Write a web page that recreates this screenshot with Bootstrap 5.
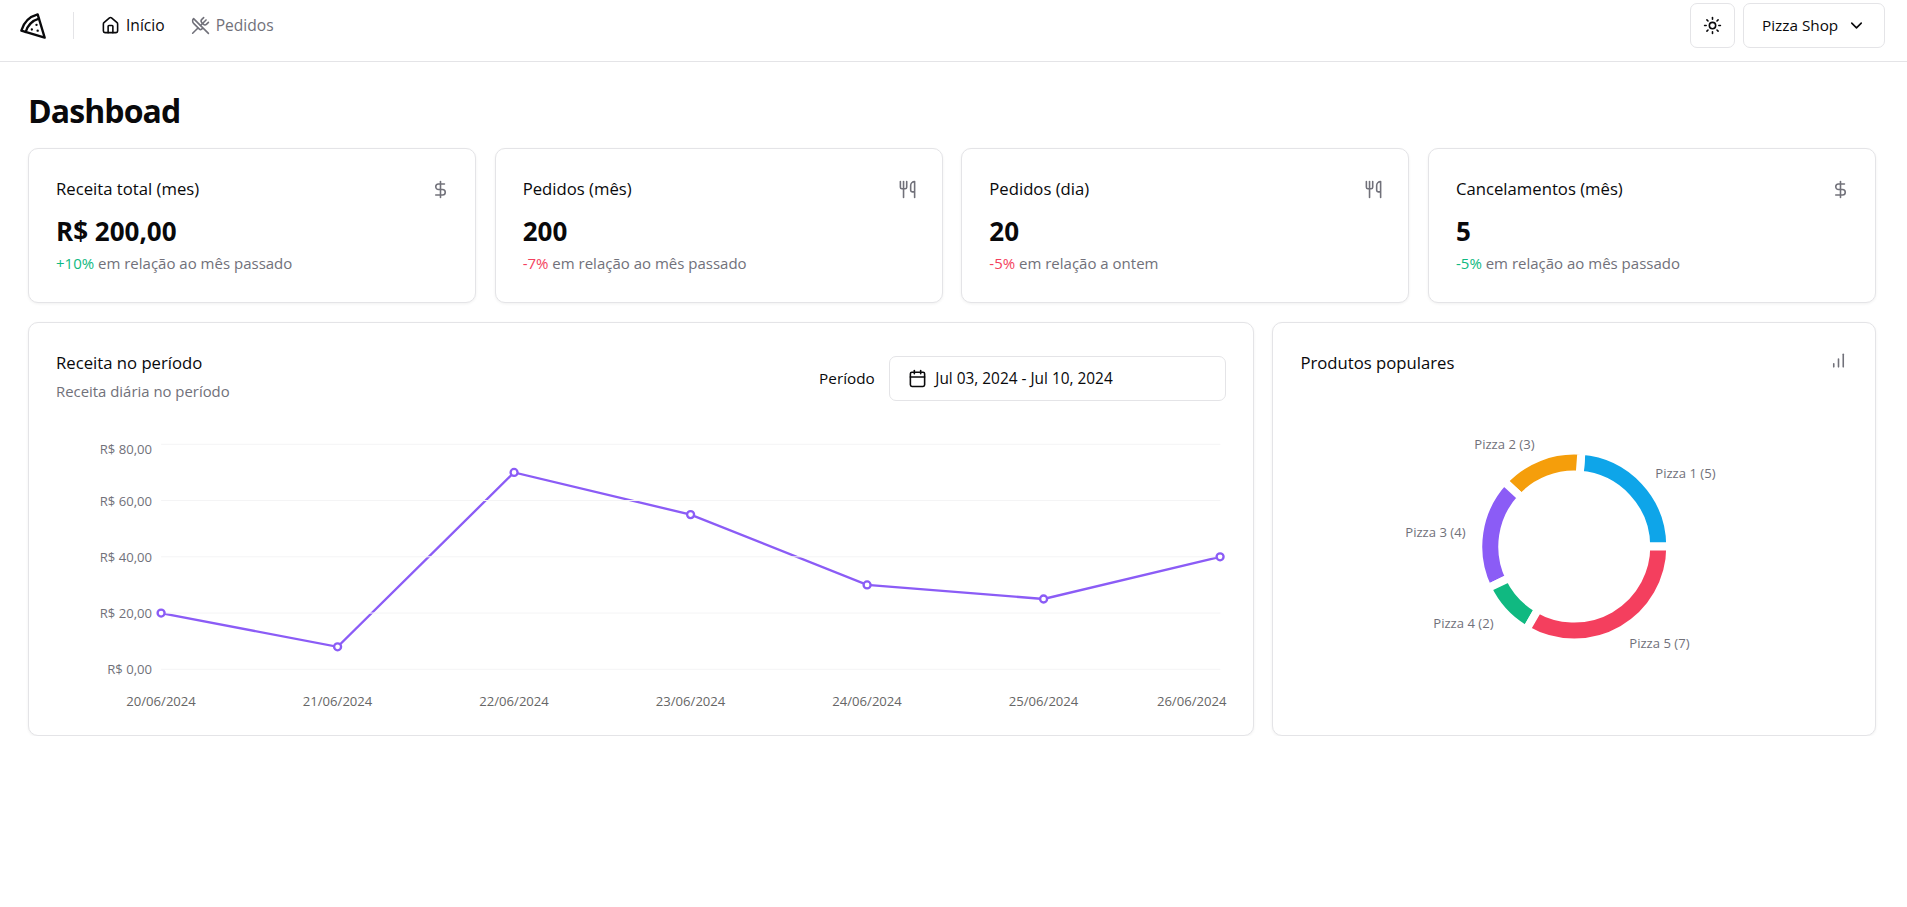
<!DOCTYPE html>
<html lang="pt-BR">
<head>
  <meta charset="UTF-8">
  <meta name="viewport" content="width=device-width, initial-scale=1.0">
  <title>Dashboard - Pizza Shop</title>
  <link href="https://cdn.jsdelivr.net/npm/bootstrap@5.3.2/dist/css/bootstrap.min.css" rel="stylesheet">
  <style>
    body {
      font-family: "Open Sans", "Liberation Sans", sans-serif;
      font-size: 15.3px;
      color: #09090b;
      background: #fff;
    }
    svg.ico {
      fill: none;
      stroke: currentColor;
      stroke-width: 2;
      stroke-linecap: round;
      stroke-linejoin: round;
      flex: none;
    }
    .top-bar {
      height: 62px;
      padding: 3px 22px 13px 19px;
      border-bottom: 1px solid #e4e4e7;
    }
    .top-divider {
      width: 1px;
      height: 27px;
      background: #e4e4e7;
      margin: 0 27px 0 26px;
    }
    .top-links { gap: 26px; }
    .top-link {
      color: #71717a;
      font-size: 15.6px;
      font-weight: 500;
      text-decoration: none;
      padding: 0;
      gap: 6px;
    }
    .top-link.is-active { color: #09090b; }
    .tool-btn {
      height: 45px;
      border: 1px solid #e4e4e7;
      border-radius: 7px;
      background: #fff;
      color: #09090b;
      font-size: 15.3px;
      font-weight: 500;
    }
    .tool-icon { width: 45px; padding: 0; }
    .tool-shop { width: 142px; padding: 0 18px; }
    .page-main { padding: 28px 31px 0 28px; }
    .page-title {
      font-size: 32px;
      font-weight: 700;
      letter-spacing: -.9px;
      line-height: 42px;
      margin-bottom: 16px;
    }
    .stat-cols {
      display: grid;
      grid-template-columns: repeat(4, 1fr);
      gap: 18.67px;
      margin-bottom: 19px;
    }
    .chart-cols {
      display: grid;
      grid-template-columns: repeat(9, 1fr);
      column-gap: 18.67px;
    }
    .chart-wide { grid-column: span 6; }
    .chart-narrow { grid-column: span 3; }
    .panel {
      border: 1px solid #e4e4e7;
      border-radius: 10px;
      box-shadow: 0 1px 3px rgba(0, 0, 0, .06);
    }
    .stat-body { padding: 27px 25px 26px 27px; height: 153px; }
    .stat-head { height: 26px; margin-bottom: 11px; font-size: 16.7px; font-weight: 500; }
    .stat-value { font-size: 26px; font-weight: 700; line-height: 37px; margin-bottom: 4px; }
    .stat-note { font-size: 15px; line-height: 19px; color: #71717a; }
    .up { color: #10b981; }
    .down { color: #f43f5e; }
    .muted-ico { color: #71717a; }
    .panel-head { padding: 28px 27px 6px 27px; height: 89px; }
    .panel-title { font-size: 16.7px; font-weight: 500; line-height: 24px; }
    .panel-sub { color: #71717a; font-size: 14.9px; line-height: 22px; margin-top: 5px; }
    .period-label { font-weight: 500; margin-right: 14px; }
    .period-box {
      width: 337px;
      height: 45px;
      border: 1px solid #e4e4e7;
      border-radius: 7px;
      padding: 0 18px;
      gap: 8.5px;
      font-size: 15.4px;
    }
    .chart-box { display: block; width: 100%; height: 323px; }
    .chart-box text { font-family: "Open Sans", "Liberation Sans", sans-serif; font-size: 13.1px; fill: #71717a; }
  </style>
</head>
<body>
  <!-- Top bar -->
  <header class="top-bar d-flex align-items-center">
    <svg class="ico" width="28" height="28" viewBox="0 0 24 24"><path d="M15 11h.01"/><path d="M11 15h.01"/><path d="M16 16h.01"/><path d="m2 16 20 6-6-20A20 20 0 0 0 2 16"/><path d="M5.71 17.11a17.04 17.04 0 0 1 11.4-11.4"/></svg>
    <div class="top-divider"></div>
    <nav class="nav top-links">
      <a class="nav-link top-link is-active d-flex align-items-center" href="#">
        <svg class="ico" width="19" height="19" viewBox="0 0 24 24"><path d="M15 21v-8a1 1 0 0 0-1-1h-4a1 1 0 0 0-1 1v8"/><path d="M3 10a2 2 0 0 1 .709-1.528l7-5.999a2 2 0 0 1 2.582 0l7 5.999A2 2 0 0 1 21 10v9a2 2 0 0 1-2 2H5a2 2 0 0 1-2-2z"/></svg>
        Início
      </a>
      <a class="nav-link top-link d-flex align-items-center" href="#">
        <svg class="ico" width="19" height="19" viewBox="0 0 24 24"><path d="m16 2-2.3 2.3a3 3 0 0 0 0 4.2l1.8 1.8a3 3 0 0 0 4.2 0L22 8"/><path d="M15 15 3.3 3.3a4.2 4.2 0 0 0 0 6l7.3 7.3c.7.7 2 .7 2.8 0L15 15Zm0 0 7 7"/><path d="m2.1 21.8 6.4-6.3"/><path d="m19 5-7 7"/></svg>
        Pedidos
      </a>
    </nav>
    <div class="ms-auto d-flex gap-2">
      <button type="button" class="btn tool-btn tool-icon d-flex align-items-center justify-content-center">
        <svg class="ico" width="19" height="19" viewBox="0 0 24 24"><circle cx="12" cy="12" r="4"/><path d="M12 2v2"/><path d="M12 20v2"/><path d="m4.93 4.93 1.41 1.41"/><path d="m17.66 17.66 1.41 1.41"/><path d="M2 12h2"/><path d="M20 12h2"/><path d="m6.34 17.66-1.41 1.41"/><path d="m19.07 4.93-1.41 1.41"/></svg>
      </button>
      <button type="button" class="btn tool-btn tool-shop d-flex align-items-center justify-content-between">
        Pizza Shop
        <svg class="ico" width="19" height="19" viewBox="0 0 24 24"><path d="m6 9 6 6 6-6"/></svg>
      </button>
    </div>
  </header>

  <main class="page-main">
    <h1 class="page-title">Dashboad</h1>

    <!-- Stat cards -->
    <section class="stat-cols">
      <div class="card panel">
        <div class="stat-body">
          <div class="stat-head d-flex justify-content-between align-items-center">
            Receita total (mes)
            <svg class="ico muted-ico" width="19" height="19" viewBox="0 0 24 24"><path d="M12 2v20"/><path d="M17 5H9.5a3.5 3.5 0 0 0 0 7h5a3.5 3.5 0 0 1 0 7H6"/></svg>
          </div>
          <div class="stat-value">R$ 200,00</div>
          <div class="stat-note"><span class="up">+10%</span> em relação ao mês passado</div>
        </div>
      </div>
      <div class="card panel">
        <div class="stat-body">
          <div class="stat-head d-flex justify-content-between align-items-center">
            Pedidos (mês)
            <svg class="ico muted-ico" width="19" height="19" viewBox="0 0 24 24"><path d="M3 2v7c0 1.1.9 2 2 2h4a2 2 0 0 0 2-2V2"/><path d="M7 2v20"/><path d="M21 15V2a5 5 0 0 0-5 5v6c0 1.1.9 2 2 2h3Zm0 0v7"/></svg>
          </div>
          <div class="stat-value">200</div>
          <div class="stat-note"><span class="down">-7%</span> em relação ao mês passado</div>
        </div>
      </div>
      <div class="card panel">
        <div class="stat-body">
          <div class="stat-head d-flex justify-content-between align-items-center">
            Pedidos (dia)
            <svg class="ico muted-ico" width="19" height="19" viewBox="0 0 24 24"><path d="M3 2v7c0 1.1.9 2 2 2h4a2 2 0 0 0 2-2V2"/><path d="M7 2v20"/><path d="M21 15V2a5 5 0 0 0-5 5v6c0 1.1.9 2 2 2h3Zm0 0v7"/></svg>
          </div>
          <div class="stat-value">20</div>
          <div class="stat-note"><span class="down">-5%</span> em relação a ontem</div>
        </div>
      </div>
      <div class="card panel">
        <div class="stat-body">
          <div class="stat-head d-flex justify-content-between align-items-center">
            Cancelamentos (mês)
            <svg class="ico muted-ico" width="19" height="19" viewBox="0 0 24 24"><path d="M12 2v20"/><path d="M17 5H9.5a3.5 3.5 0 0 0 0 7h5a3.5 3.5 0 0 1 0 7H6"/></svg>
          </div>
          <div class="stat-value">5</div>
          <div class="stat-note"><span class="up">-5%</span> em relação ao mês passado</div>
        </div>
      </div>
    </section>

    <!-- Charts -->
    <section class="chart-cols">
      <div class="card panel chart-wide">
        <div class="panel-head d-flex justify-content-between align-items-center">
          <div class="align-self-start">
            <div class="panel-title">Receita no período</div>
            <div class="panel-sub">Receita diária no período</div>
          </div>
          <div class="d-flex align-items-center">
            <span class="period-label">Período</span>
            <div class="period-box d-flex align-items-center">
              <svg class="ico" width="19" height="19" viewBox="0 0 24 24"><path d="M8 2v4"/><path d="M16 2v4"/><rect width="18" height="18" x="3" y="4" rx="2"/><path d="M3 10h18"/></svg>
              Jul 03, 2024 - Jul 10, 2024
            </div>
          </div>
        </div>
        <svg class="chart-box" id="lineChart" viewBox="29 412 1223 323"></svg>
      </div>
      <div class="card panel chart-narrow">
        <div class="panel-head d-flex justify-content-between align-items-start">
          <div class="panel-title">Produtos populares</div>
          <svg class="ico muted-ico" width="19" height="19" viewBox="0 0 24 24"><path d="M12 20V10"/><path d="M18 20V4"/><path d="M6 20v-4"/></svg>
        </div>
        <svg class="chart-box" id="donutChart" viewBox="1273 412 601 323"></svg>
      </div>
    </section>
  </main>

  <script>
    // Revenue line chart, coordinates are page pixels (see the viewBox)
    const revenue = [
      ['20/06/2024', 20], ['21/06/2024', 8], ['22/06/2024', 70], ['23/06/2024', 55],
      ['24/06/2024', 30], ['25/06/2024', 25], ['26/06/2024', 40]
    ];
    const xAt = i => 160.7 + i * 176.5;
    const yAt = v => 669.3 - v * 2.8125;
    const points = revenue.map((r, i) => `${xAt(i)},${yAt(r[1])}`).join(' ');
    let line = `<polyline points="${points}" fill="none" stroke="#8b5cf6" stroke-width="2.33"/>`;
    [0, 20, 40, 60, 80].forEach(v => {
      const y = yAt(v);
      line += `<line x1="160.7" x2="1220" y1="${y}" y2="${y}" stroke="#f4f4f5"/>`;
      const labelY = v === 80 ? y + 9.5 : y + 5;
      line += `<text x="151.7" y="${labelY}" text-anchor="end">R$ ${v},00</text>`;
    });
    revenue.forEach((r, i) => {
      line += `<circle cx="${xAt(i)}" cy="${yAt(r[1])}" r="3.5" fill="#fff" stroke="#8b5cf6" stroke-width="2.33"/>`;
      const anchor = i === 6 ? 'end' : 'middle';
      const labelX = i === 6 ? 1226 : xAt(i);
      line += `<text x="${labelX}" y="706" text-anchor="${anchor}" style="fill:#666">${r[0]}</text>`;
    });
    document.getElementById('lineChart').innerHTML = line;

    // Popular products donut, drawn counter-clockwise from 3 o'clock
    const products = [
      ['Pizza 1 (5)', 5, '#0ea5e9', 1655, 477.5],
      ['Pizza 2 (3)', 3, '#f59e0b', 1474, 449],
      ['Pizza 3 (4)', 4, '#8b5cf6', 1405, 537],
      ['Pizza 4 (2)', 2, '#10b981', 1433, 627.5],
      ['Pizza 5 (7)', 7, '#f43f5e', 1629, 647.5]
    ];
    const cx = 1574, cy = 546.6, rOut = 96, rIn = 72;
    const total = products.reduce((sum, p) => sum + p[1], 0);
    const pt = (r, a) => `${(cx + r * Math.cos(a)).toFixed(2)} ${(cy - r * Math.sin(a)).toFixed(2)}`;
    let donut = '', start = 0;
    products.forEach(p => {
      const end = start + p[1] / total * Math.PI * 2;
      const big = end - start > Math.PI ? 1 : 0;
      donut += `<path d="M${pt(rOut, start)}A${rOut} ${rOut} 0 ${big} 0 ${pt(rOut, end)}L${pt(rIn, end)}A${rIn} ${rIn} 0 ${big} 1 ${pt(rIn, start)}Z" fill="${p[2]}" stroke="#fff" stroke-width="8"/>`;
      donut += `<text x="${p[3]}" y="${p[4]}">${p[0]}</text>`;
      start = end;
    });
    document.getElementById('donutChart').innerHTML = donut;
  </script>
  <script src="https://cdn.jsdelivr.net/npm/bootstrap@5.3.2/dist/js/bootstrap.bundle.min.js"></script>
</body>
</html>
